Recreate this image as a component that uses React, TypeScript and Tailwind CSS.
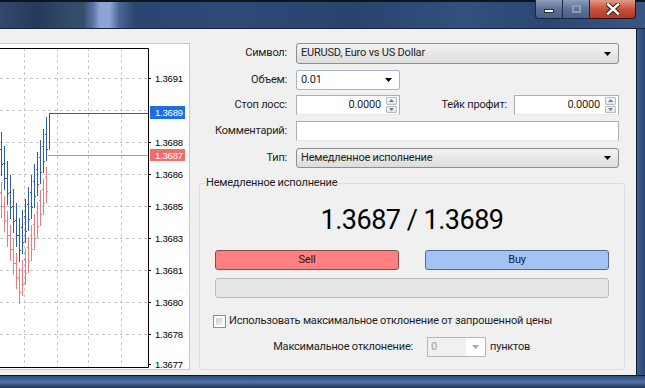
import React from 'react';

// price axis labels of the chart (page coords)
const axisLabels = [
  { y: 78, t: '1.3691' },
  { y: 142, t: '1.3688' },
  { y: 174, t: '1.3686' },
  { y: 206, t: '1.3685' },
  { y: 238, t: '1.3683' },
  { y: 270, t: '1.3681' },
  { y: 302, t: '1.3680' },
  { y: 334, t: '1.3678' },
  { y: 364, t: '1.3677' },
];

const gridX = [24, 57, 88, 121];
const gridY = [78, 110, 142, 174, 206, 238, 270, 302, 334];

// rough V-shaped run of bars
const bars = Array.from({ length: 16 }, (_, i) => {
  const x = 1.5 + i * 3;
  const c = x < 20 ? 155 + (x / 20) * 95 : 250 - ((x - 20) / 27) * 105;
  return { x, c: Math.round(c) };
});

function Chart() {
  return (
    <div className="w-[190px] h-[327px] mt-[14px] bg-white border-t border-r border-b border-[#c9c9c9]">
      <svg width="189" height="325" viewBox="0 44 189 325" className="block">
        {gridX.map(x => (
          <line key={x} x1={x + 0.5} y1={48} x2={x + 0.5} y2={367} stroke="#c8c8c8" strokeDasharray="3 3" />
        ))}
        {gridY.map(y => (
          <line key={y} x1={0} y1={y + 0.5} x2={148} y2={y + 0.5} stroke="#c8c8c8" strokeDasharray="3 3" />
        ))}
        {bars.map(b => (
          <g key={'r' + b.x} stroke="#e58080">
            <line x1={b.x} y1={b.c + 20} x2={b.x} y2={b.c + 56} />
            <line x1={b.x - 1.5} y1={b.c + 30.5} x2={b.x} y2={b.c + 30.5} />
            <line x1={b.x} y1={b.c + 44.5} x2={b.x + 1.5} y2={b.c + 44.5} />
          </g>
        ))}
        {bars.map(b => (
          <g key={'b' + b.x} stroke="#2a5ea8">
            <line x1={b.x} y1={Math.max(114, b.c - 30)} x2={b.x} y2={b.c + 14} />
            <line x1={b.x - 1.5} y1={b.c - 12.5} x2={b.x} y2={b.c - 12.5} />
            <line x1={b.x} y1={b.c + 2.5} x2={b.x + 1.5} y2={b.c + 2.5} />
          </g>
        ))}
        <line x1={49.5} y1={113} x2={49.5} y2={150} stroke="#2a5ea8" />
        <line x1={49} y1={113.5} x2={148} y2={113.5} stroke="#2a5ea8" />
        <line x1={48} y1={155.5} x2={148} y2={155.5} stroke="#e58080" />
        {/* plot frame */}
        <path d="M0 48.5H148.5V367.5H0" fill="none" stroke="#000" />
        {axisLabels.map(l => (
          <line key={'t' + l.y} x1={148} y1={l.y + 0.5} x2={151} y2={l.y + 0.5} stroke="#000" />
        ))}
        <g fontFamily="'Liberation Sans', Arial, sans-serif" fontSize="9.5" fill="#000">
          {axisLabels.map(l => (
            <text key={l.t} x={155} y={l.y + 4}>{l.t}</text>
          ))}
        </g>
        <rect x={150} y={106} width={35} height={13} fill="#1c6fe3" />
        <text x={155} y={116} fontFamily="'Liberation Sans', Arial, sans-serif" fontSize="9.5" fill="#fff">1.3689</text>
        <rect x={150} y={149} width={35} height={12} fill="#f06d6d" />
        <text x={155} y={159} fontFamily="'Liberation Sans', Arial, sans-serif" fontSize="9.5" fill="#fff">1.3687</text>
      </svg>
    </div>
  );
}

function Caret({ color = '#000' }: { color?: string }) {
  return (
    <svg width="7" height="4" viewBox="0 0 7 4" className="shrink-0">
      <path d="M0 0h7L3.5 4z" fill={color} />
    </svg>
  );
}

function Spin() {
  return (
    <div className="flex flex-col gap-px w-[11px] h-[16px] mr-[2px]">
      <div className="flex-1 flex items-center justify-center rounded-[1px] border border-[#b8bcc2] bg-gradient-to-b from-[#f7f7f7] to-[#e4e4e4]">
        <svg width="5" height="3" viewBox="0 0 5 3"><path d="M0 3h5L2.5 0z" fill="#6a7d96" /></svg>
      </div>
      <div className="flex-1 flex items-center justify-center rounded-[1px] border border-[#b8bcc2] bg-gradient-to-b from-[#f7f7f7] to-[#e4e4e4]">
        <svg width="5" height="3" viewBox="0 0 5 3"><path d="M0 0h5L2.5 3z" fill="#6a7d96" /></svg>
      </div>
    </div>
  );
}

function Label({ children }: { children: React.ReactNode }) {
  return <div className="w-[88px] shrink-0 text-right whitespace-nowrap">{children}</div>;
}

function OrderForm() {
  return (
    <div className="w-[426px] ml-[9px] flex flex-col">
      {/* Символ */}
      <div className="flex items-center h-[21px] mt-[14px] pr-[6px]">
        <Label>Символ:</Label>
        <div className="flex-1 ml-[9px] h-full flex items-center pl-[4px] pr-[7px] rounded-[3px] border border-[#8e8f8f] bg-gradient-to-b from-[#f3f3f3] to-[#dcdcdc]">
          <span className="flex-1">EURUSD, Euro vs US Dollar</span>
          <Caret />
        </div>
      </div>

      {/* Объем */}
      <div className="flex items-center h-[20px] mt-[6px]">
        <Label>Объем:</Label>
        <div className="w-[104px] ml-[9px] h-full flex items-center pl-[4px] pr-[7px] rounded-[2px] border border-[#a9b4c4] bg-white">
          <span className="flex-1">0.01</span>
          <Caret />
        </div>
      </div>

      {/* Стоп лосс / Тейк профит */}
      <div className="flex items-center h-[20px] mt-[5px] pr-[6px]">
        <Label>Стоп лосс:</Label>
        <div className="w-[104px] ml-[9px] h-full flex items-center justify-end border border-[#abadb3] border-b-[#e3e9ef] bg-white">
          <span className="mr-[5px]">0.0000</span>
          <Spin />
        </div>
        <div className="flex-1 text-right mr-[7px]">Тейк профит:</div>
        <div className="w-[105px] h-full flex items-center justify-end border border-[#abadb3] border-b-[#e3e9ef] bg-white">
          <span className="mr-[5px]">0.0000</span>
          <Spin />
        </div>
      </div>

      {/* Комментарий */}
      <div className="flex items-center h-[20px] mt-[6px] pr-[6px]">
        <Label>Комментарий:</Label>
        <div className="flex-1 ml-[9px] h-full border border-[#abadb3] border-b-[#e3e9ef] bg-white" />
      </div>

      {/* Тип */}
      <div className="flex items-center h-[20px] mt-[7px] pr-[6px]">
        <Label>Тип:</Label>
        <div className="flex-1 ml-[9px] h-full flex items-center pl-[4px] pr-[7px] rounded-[3px] border border-[#8e8f8f] bg-gradient-to-b from-[#f3f3f3] to-[#dcdcdc]">
          <span className="flex-1">Немедленное исполнение</span>
          <Caret />
        </div>
      </div>

      <fieldset className="mt-[7px] h-[195px] rounded-[3px] border border-[#d5dfe5] px-[15px] min-w-0">
        <legend className="-ml-[10px] px-[1px] leading-[16px]">Немедленное исполнение</legend>
        <div className="mt-[12px] h-[34px] text-center text-[27px] leading-[34px] tracking-[-0.5px] text-black">1.3687 / 1.3689</div>
        <div className="mt-[13px] flex gap-[26px]">
          <button className="flex-1 h-[20px] rounded-[3px] border border-[#8c4a4a] bg-[#ff8080] text-[#3a0b0b] leading-[18px]">Sell</button>
          <button className="flex-1 h-[20px] rounded-[3px] border border-[#4f6b96] bg-[#a4c2f4] text-[#0f1f3a] leading-[18px]">Buy</button>
        </div>
        <div className="mt-[8px] h-[20px] rounded-[3px] border border-[#bcbcbc] bg-[#e6e6e6]" />
        <div className="mt-[17px] -ml-[2px] flex items-center h-[13px]">
          <div className="w-[13px] h-[13px] border border-[#8f8f8f] bg-white p-[2px]">
            <div className="w-full h-full bg-gradient-to-br from-[#cbcbcb] to-[#f6f6f6]" />
          </div>
          <span className="ml-[3px]">Использовать максимальное отклонение от запрошенной цены</span>
        </div>
        <div className="mt-[9px] flex items-center h-[20px]">
          <div className="w-[198px] text-right">Максимальное отклонение:</div>
          <div className="ml-[14px] w-[59px] h-full flex items-center border border-[#b5b9bd] bg-white">
            <div className="w-[38px] h-full bg-[#f0f0f0] pl-[3px] leading-[18px] text-[#a0a0a0]">0</div>
            <div className="flex-1 flex justify-center"><Caret color="#a8a8a8" /></div>
          </div>
          <span className="ml-[4px]">пунктов</span>
        </div>
      </fieldset>
    </div>
  );
}

function TitleBar() {
  return (
    <div className="h-[29px] shrink-0 flex justify-end border-b border-[#15233a] shadow-[inset_0_2px_0_#0c1622] bg-[linear-gradient(90deg,#33486a_0%,#263a5c_6%,#2e4662_9%,#36506c_13%,#5d77a8_14.5%,#8ea4d6_15.5%,#8ea4d6_17%,#4a6494_18.5%,#2c4470_21%,#2f4a78_35%,#2a436e_55%,#32507e_72%,#2c4672_85%,#3a5684_100%)]">
      <div className="flex h-[19px] mr-[9px]">
        <div className="w-[28px] flex items-center justify-center rounded-bl-[4px] border border-t-0 border-[#1b283c] bg-gradient-to-b from-[#8d9dbb] via-[#5d7097] to-[#4a5f88]">
          <div className="w-[10px] h-[4px] mt-[4px] bg-white border border-[#2b3140]" />
        </div>
        <div className="w-[27px] flex items-center justify-center border-b border-r border-[#1b283c] bg-gradient-to-b from-[#8d9dbb] via-[#5d7097] to-[#4a5f88]">
          <div className="w-[9px] h-[8px] border-2 border-[#8c9ab5]" />
        </div>
        <div className="w-[46px] flex items-center justify-center rounded-br-[4px] border-b border-r border-[#3a1010] bg-gradient-to-b from-[#e09a8a] via-[#c9503a] to-[#b23a22]">
          <svg width="14" height="12" viewBox="0 0 14 12">
            <path d="M2 1.5L12 10.5M12 1.5L2 10.5" stroke="#3b1a14" strokeWidth="4.5" strokeLinecap="square" />
            <path d="M2 1.5L12 10.5M12 1.5L2 10.5" stroke="#ffffff" strokeWidth="2.5" strokeLinecap="square" />
          </svg>
        </div>
      </div>
    </div>
  );
}

export default function App() {
  return (
    <div className="w-[645px] h-[388px] overflow-hidden flex flex-col bg-[#23375a] font-['Roboto','Noto_Sans',sans-serif] text-[11px] tracking-[-0.2px] text-[#1e1e1e]">
      <TitleBar />
      <div className="flex h-[346px] shrink-0">
        <div className="w-[636px] shrink-0 flex bg-[#f0f0f0]">
          <Chart />
          <OrderForm />
        </div>
        <div className="flex-1 border-l border-[#0d1a2e] bg-gradient-to-r from-[#3f5f90] to-[#2a4572]" />
      </div>
      <div className="flex-1 border-t border-[#0d1a2e] bg-gradient-to-b from-[#2d4a78] via-[#5272a6] to-[#1d3358]" />
    </div>
  );
}
